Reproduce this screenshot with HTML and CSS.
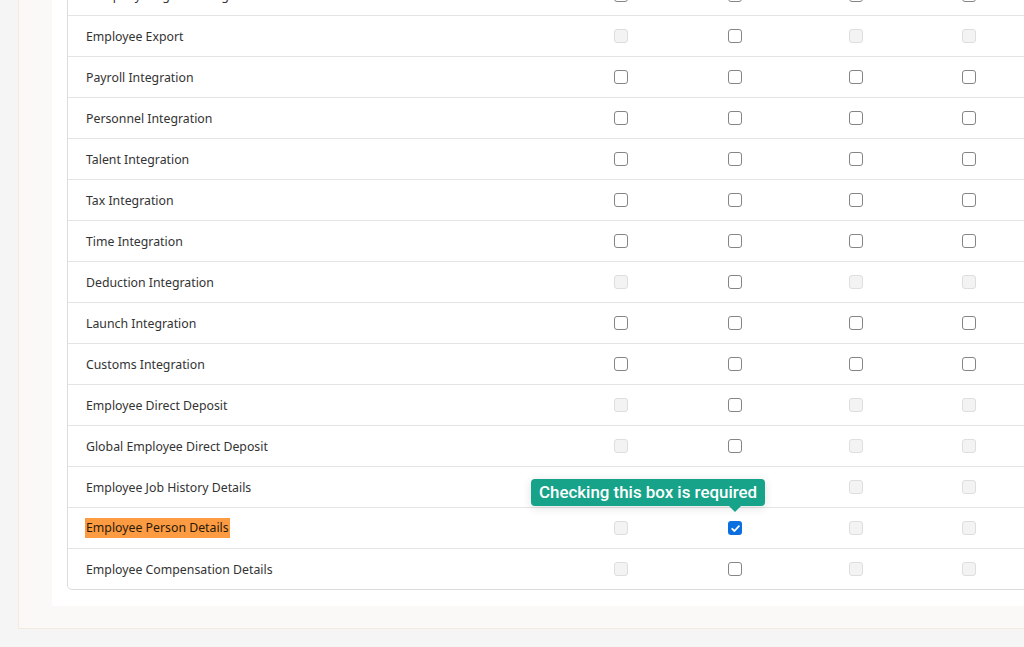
FILE: index.html
```html
<!DOCTYPE html>
<html lang="en">
<head>
<meta charset="utf-8">
<title>Integration permissions</title>
<link rel="stylesheet" href="styles.css">
</head>
<body>
<div class="outer">
  <div class="panel">
    <div class="table">
      <div class="row"><div class="name">Company Wage Tracking</div><div class="cell"><span class="cb"></span></div><div class="cell"><span class="cb"></span></div><div class="cell"><span class="cb"></span></div><div class="cell"><span class="cb"></span></div><div class="cell"><span class="cb"></span></div></div>
      <div class="row"><div class="name">Employee Export</div><div class="cell"><span class="cb dis"></span></div><div class="cell"><span class="cb"></span></div><div class="cell"><span class="cb dis"></span></div><div class="cell"><span class="cb dis"></span></div><div class="cell"><span class="cb dis"></span></div></div>
      <div class="row"><div class="name">Payroll Integration</div><div class="cell"><span class="cb"></span></div><div class="cell"><span class="cb"></span></div><div class="cell"><span class="cb"></span></div><div class="cell"><span class="cb"></span></div><div class="cell"><span class="cb"></span></div></div>
      <div class="row"><div class="name">Personnel Integration</div><div class="cell"><span class="cb"></span></div><div class="cell"><span class="cb"></span></div><div class="cell"><span class="cb"></span></div><div class="cell"><span class="cb"></span></div><div class="cell"><span class="cb"></span></div></div>
      <div class="row"><div class="name">Talent Integration</div><div class="cell"><span class="cb"></span></div><div class="cell"><span class="cb"></span></div><div class="cell"><span class="cb"></span></div><div class="cell"><span class="cb"></span></div><div class="cell"><span class="cb"></span></div></div>
      <div class="row"><div class="name">Tax Integration</div><div class="cell"><span class="cb"></span></div><div class="cell"><span class="cb"></span></div><div class="cell"><span class="cb"></span></div><div class="cell"><span class="cb"></span></div><div class="cell"><span class="cb"></span></div></div>
      <div class="row"><div class="name">Time Integration</div><div class="cell"><span class="cb"></span></div><div class="cell"><span class="cb"></span></div><div class="cell"><span class="cb"></span></div><div class="cell"><span class="cb"></span></div><div class="cell"><span class="cb"></span></div></div>
      <div class="row"><div class="name">Deduction Integration</div><div class="cell"><span class="cb dis"></span></div><div class="cell"><span class="cb"></span></div><div class="cell"><span class="cb dis"></span></div><div class="cell"><span class="cb dis"></span></div><div class="cell"><span class="cb dis"></span></div></div>
      <div class="row"><div class="name">Launch Integration</div><div class="cell"><span class="cb"></span></div><div class="cell"><span class="cb"></span></div><div class="cell"><span class="cb"></span></div><div class="cell"><span class="cb"></span></div><div class="cell"><span class="cb"></span></div></div>
      <div class="row"><div class="name">Customs Integration</div><div class="cell"><span class="cb"></span></div><div class="cell"><span class="cb"></span></div><div class="cell"><span class="cb"></span></div><div class="cell"><span class="cb"></span></div><div class="cell"><span class="cb"></span></div></div>
      <div class="row"><div class="name">Employee Direct Deposit</div><div class="cell"><span class="cb dis"></span></div><div class="cell"><span class="cb"></span></div><div class="cell"><span class="cb dis"></span></div><div class="cell"><span class="cb dis"></span></div><div class="cell"><span class="cb dis"></span></div></div>
      <div class="row"><div class="name">Global Employee Direct Deposit</div><div class="cell"><span class="cb dis"></span></div><div class="cell"><span class="cb"></span></div><div class="cell"><span class="cb dis"></span></div><div class="cell"><span class="cb dis"></span></div><div class="cell"><span class="cb dis"></span></div></div>
      <div class="row"><div class="name">Employee Job History Details</div><div class="cell"><span class="cb dis"></span></div><div class="cell"><span class="cb"></span></div><div class="cell"><span class="cb dis"></span></div><div class="cell"><span class="cb dis"></span></div><div class="cell"><span class="cb dis"></span></div></div>
      <div class="row"><div class="name"><span class="hl">Employee Person Details</span></div><div class="cell"><span class="cb dis"></span></div><div class="cell tip-anchor"><span class="cb on"><svg viewBox="0 0 13 13" width="13" height="13"><path d="M3.2 6.8 L5.5 9 L9.9 4.1" fill="none" stroke="#fff" stroke-width="1.8" stroke-linecap="round" stroke-linejoin="round"/></svg></span><div class="tooltip">Checking this box is required</div></div><div class="cell"><span class="cb dis"></span></div><div class="cell"><span class="cb dis"></span></div><div class="cell"><span class="cb dis"></span></div></div>
      <div class="row"><div class="name">Employee Compensation Details</div><div class="cell"><span class="cb dis"></span></div><div class="cell"><span class="cb"></span></div><div class="cell"><span class="cb dis"></span></div><div class="cell"><span class="cb dis"></span></div><div class="cell"><span class="cb dis"></span></div></div>
    </div>
  </div>
</div>
</body>
</html>
```

FILE: styles.css
```css
html, body {
  margin: 0;
  padding: 0;
  background: #f5f5f5;
  overflow: hidden;
  height: 647px;
}

.outer {
  margin: -40px 0 0 18px;
  width: 1100px;
  padding: 0 0 22px 33px;
  background: #faf9f7;
  border: 1px solid #f3eadb;
}

.panel {
  background: #ffffff;
  padding: 13px 0 16px 15px;
}

.table {
  border: 1px solid #dcdcdc;
  border-radius: 0 0 0 5px;
  background: #fff;
  font-family: "Noto Sans", "Open Sans", sans-serif;
  font-size: 12.3px;
  color: #333;
}

.row {
  display: grid;
  grid-template-columns: 496px 114px 114px 128px 98px 120px;
  height: 40px;
  border-bottom: 1px solid #e4e4e4;
}

.row:last-child {
  border-bottom: none;
}

.name {
  display: flex;
  align-items: center;
  padding-left: 18px;
}

.hl {
  background: #fd9b42;
  color: #2a1a0a;
  padding: 1px 1px 2px 1px;
  margin-left: -1px;
}

.cell {
  display: flex;
  align-items: center;
  justify-content: center;
}

.cb {
  box-sizing: border-box;
  width: 14px;
  height: 14px;
  border: 1px solid #858585;
  border-radius: 3px;
  background: #fff;
  display: block;
}

.cb.dis {
  border-color: #dedede;
  background: #f3f3f3;
}

.cb.on {
  border: none;
  background: #0b6fe0;
  position: relative;
}

.cb.on svg {
  display: block;
  margin: 0.5px;
}

.tip-anchor {
  position: relative;
}

.tooltip {
  position: absolute;
  left: -147px;
  top: -29px;
  height: 27px;
  line-height: 27px;
  padding: 0 8px;
  background: #16a389;
  color: #fff;
  border-radius: 4px;
  font-family: Roboto, "Liberation Sans", Arial, sans-serif;
  font-weight: 500;
  font-size: 16.9px;
  white-space: nowrap;
  box-shadow: 0 2px 10px rgba(0, 0, 0, 0.12);
  z-index: 2;
}

.tooltip::after {
  content: "";
  position: absolute;
  left: 198px;
  bottom: -6px;
  border-left: 6px solid transparent;
  border-right: 6px solid transparent;
  border-top: 6px solid #16a389;
}
```
